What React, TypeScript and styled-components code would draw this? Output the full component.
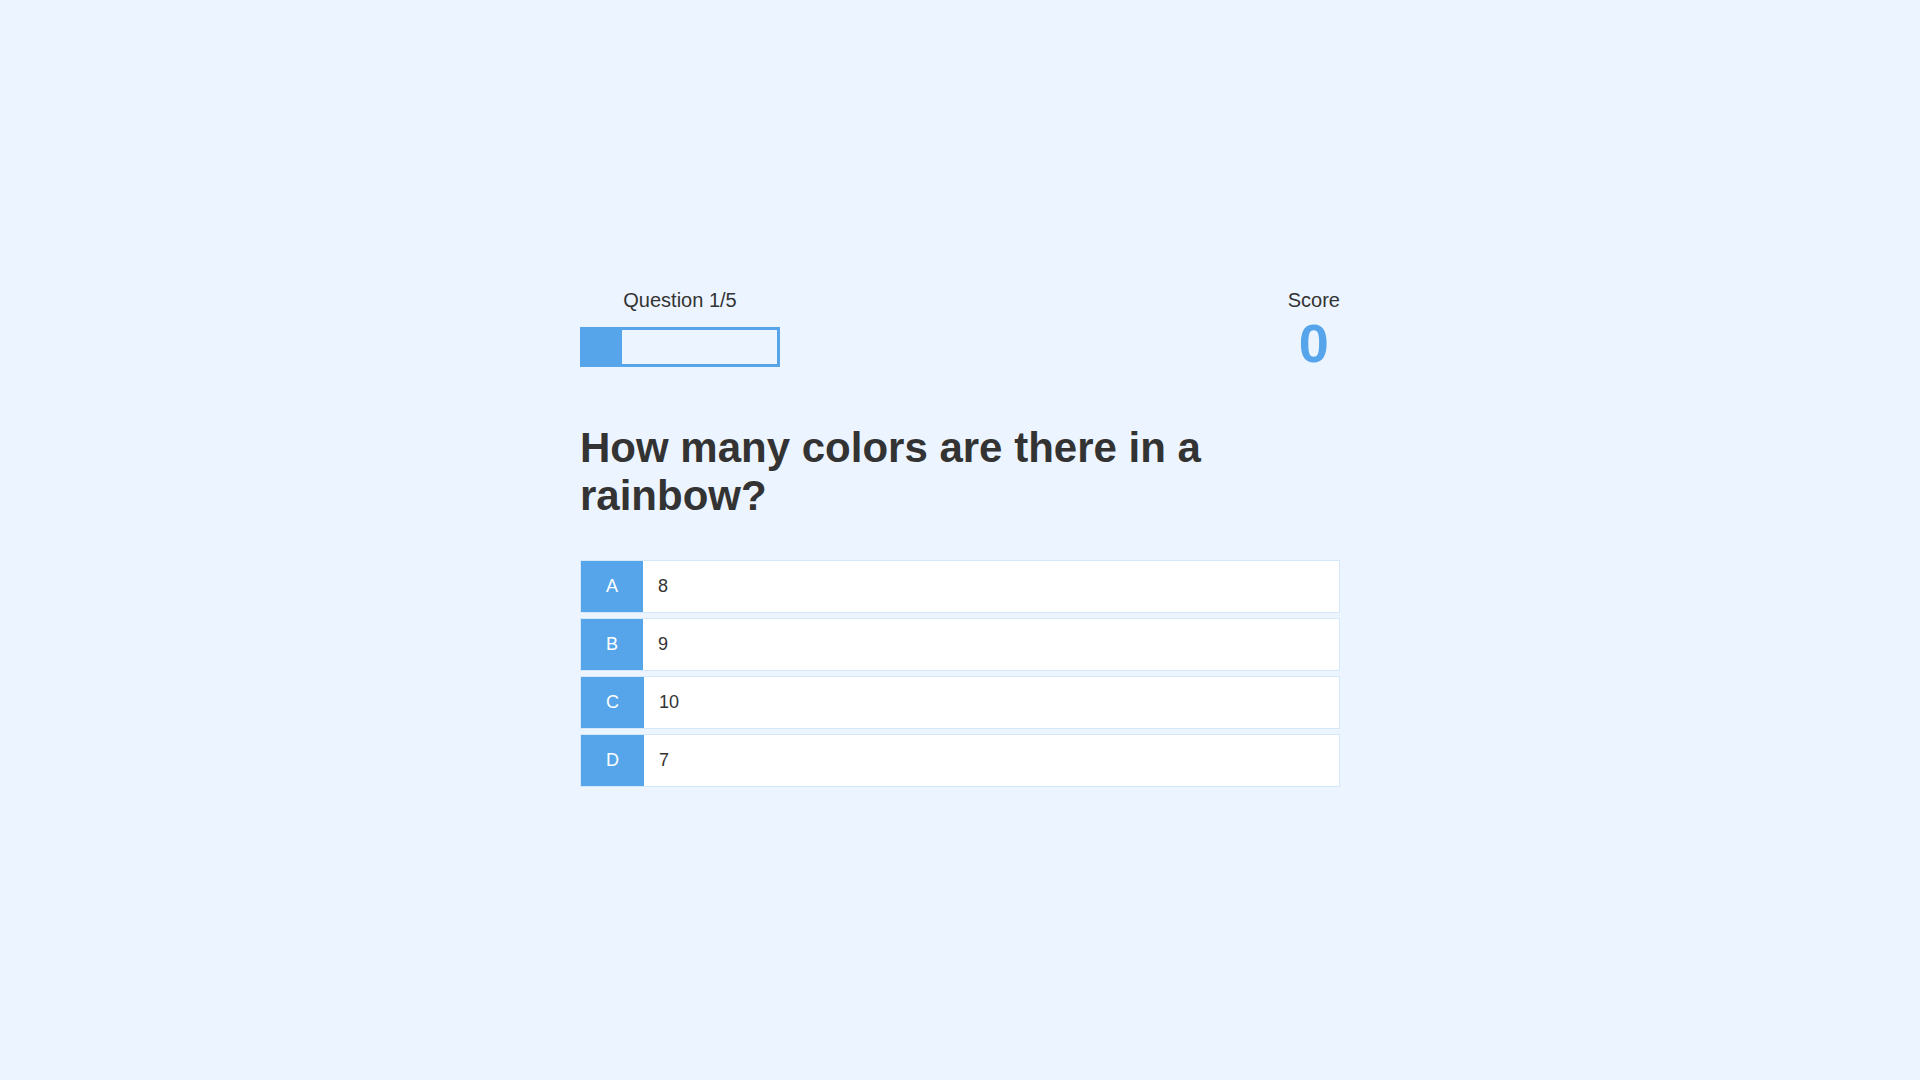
import React from "react";
import styled, { createGlobalStyle } from "styled-components";

const GlobalStyle = createGlobalStyle`
  *, *::before, *::after { margin: 0; padding: 0; box-sizing: border-box; }
  html, body { margin: 0; padding: 0; }
  body {
    background-color: #ecf5ff;
    color: #333;
    font-family: "Liberation Sans", Arial, sans-serif;
  }
`;

const Container = styled.div`
  width: 100vw;
  height: 100vh;
  max-width: 800px;
  margin: 0 auto;
  padding: 20px;
  display: flex;
  flex-direction: column;
  justify-content: center;
`;

const Hud = styled.div`
  display: flex;
  justify-content: space-between;
`;

const HudItem = styled.div`
  display: flex;
  flex-direction: column;
`;

const HudPrefix = styled.p`
  text-align: center;
  font-size: 20px;
`;

const HudMainText = styled.h1`
  text-align: center;
  font-size: 54px;
  color: #56a5eb;
  margin-bottom: 50px;
`;

const ProgressBar = styled.div`
  width: 200px;
  height: 40px;
  border: 3px solid #56a5eb;
  margin-top: 15px;
`;

const ProgressFill = styled.div<{ $pct: number }>`
  height: 34px;
  background-color: #56a5eb;
  width: ${(p) => p.$pct}%;
`;

const Question = styled.h2`
  font-size: 42px;
  margin-bottom: 40px;
`;

const Choice = styled.div`
  display: flex;
  width: 100%;
  margin-bottom: 5px;
  font-size: 18px;
  border: 1px solid rgba(86, 165, 235, 0.25);
  background-color: white;
`;

const ChoicePrefix = styled.p`
  padding: 15px 25px;
  background-color: #56a5eb;
  color: white;
`;

const ChoiceText = styled.p`
  padding: 15px;
  width: 100%;
`;

const choices = [
  { prefix: "A", text: "8" },
  { prefix: "B", text: "9" },
  { prefix: "C", text: "10" },
  { prefix: "D", text: "7" },
];

export default function App() {
  const current = 1;
  const total = 5;
  return (
    <>
      <GlobalStyle />
      <Container>
        <Hud>
          <HudItem>
            <HudPrefix>
              Question {current}/{total}
            </HudPrefix>
            <ProgressBar>
              <ProgressFill $pct={(current / total) * 100} />
            </ProgressBar>
          </HudItem>
          <HudItem>
            <HudPrefix>Score</HudPrefix>
            <HudMainText>0</HudMainText>
          </HudItem>
        </Hud>
        <Question>How many colors are there in a rainbow?</Question>
        {choices.map((c) => (
          <Choice key={c.prefix}>
            <ChoicePrefix>{c.prefix}</ChoicePrefix>
            <ChoiceText>{c.text}</ChoiceText>
          </Choice>
        ))}
      </Container>
    </>
  );
}
